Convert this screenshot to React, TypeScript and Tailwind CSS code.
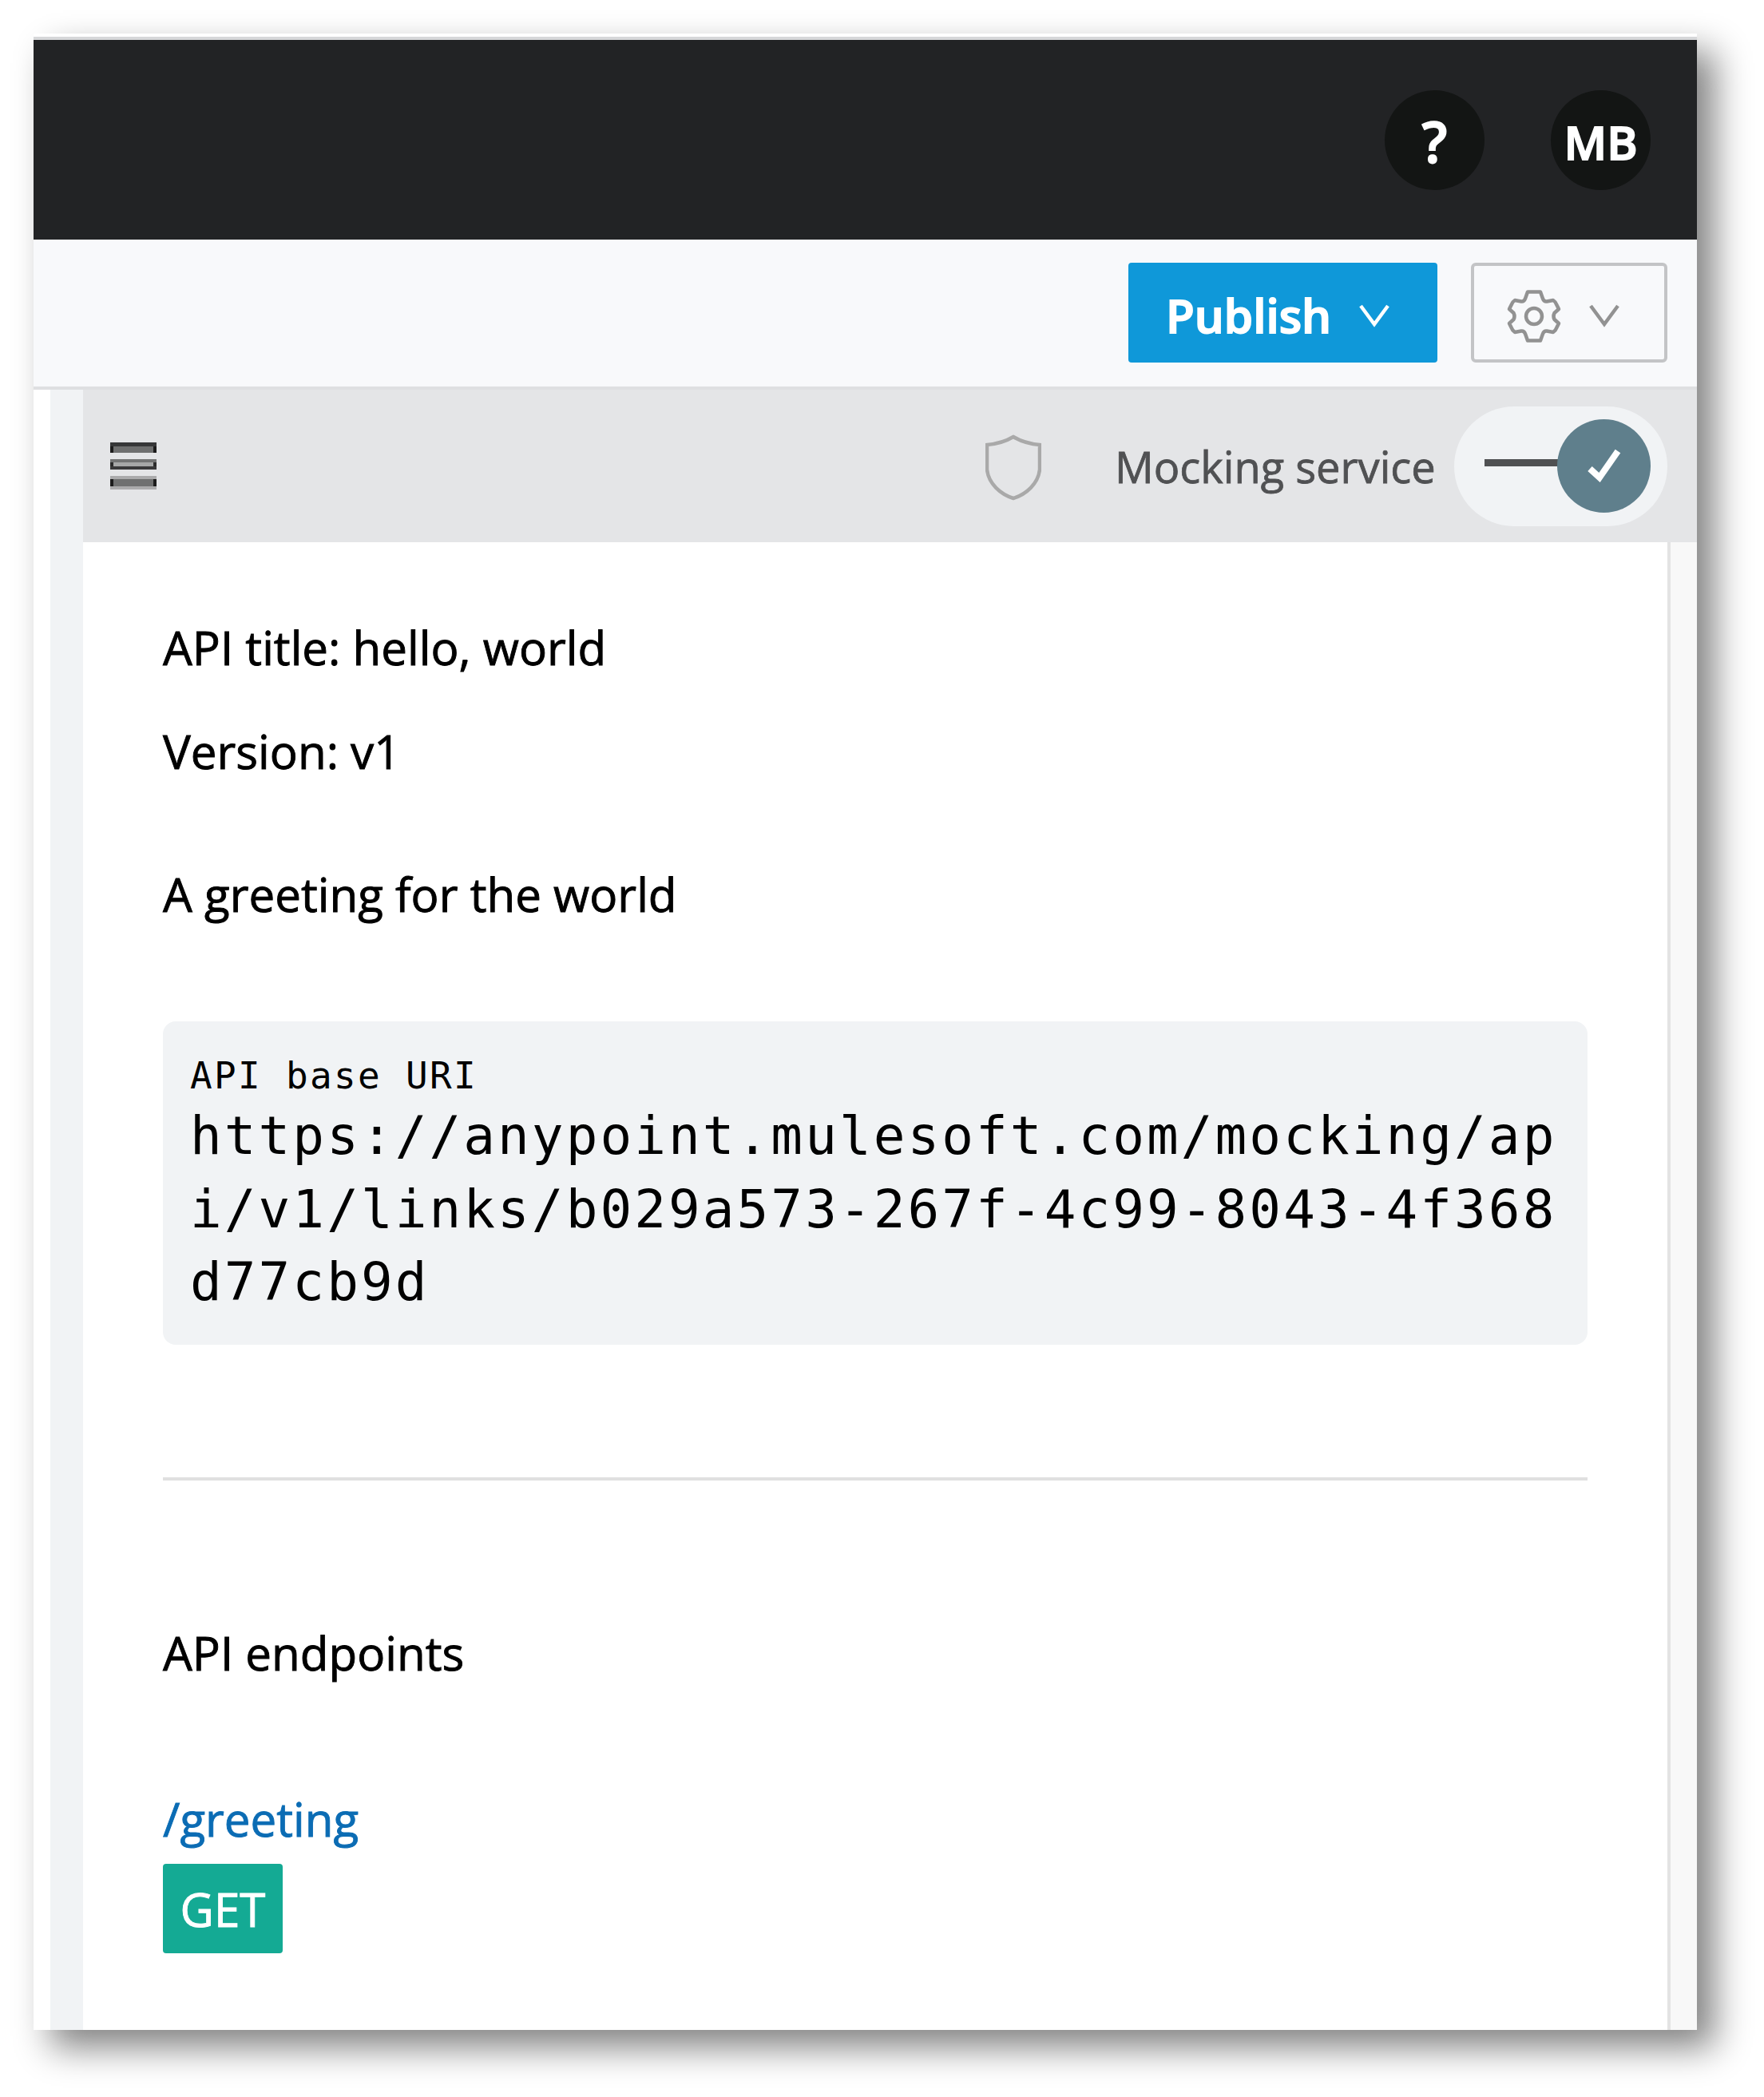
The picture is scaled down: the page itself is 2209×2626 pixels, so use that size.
import type { ReactNode } from "react";

function Chevron({ className }: { className: string }) {
  return (
    <svg width="40" height="32" viewBox="0 0 40 32" fill="none" className={className}>
      <path d="M3 3 L20 26 L37 3" stroke="currentColor" strokeWidth="4.500" />
    </svg>
  );
}

function GearIcon() {
  return (
    <svg width="70" height="70" viewBox="0 0 70 70" fill="none" stroke="#929292" strokeWidth="4.500" strokeLinejoin="round" className="mt-[9px]">
      <path d="M27 4.5H43L46 13Q47.500 17 51 16.500L59 15Q62 17 63 20L66 26L60.500 31Q58.500 35 60.500 39L66 44L63 50Q62 53 59 55L51 53.500Q47.500 53 46 57L43 65.500H27L24 57Q22.500 53 19 53.500L11 55Q8 53 7 50L4 44L9.500 39Q11.500 35 9.500 31L4 26L7 20Q8 17 11 15L19 16.500Q22.500 17 24 13Z" />
      <circle cx="35" cy="35" r="10" />
    </svg>
  );
}

function ShieldIcon() {
  return (
    <svg width="70" height="86" viewBox="0 0 70 86" fill="none" className="mt-[3px]">
      <path
        d="M35 5C25 11 14 14 2 15V46C4 64 19 77 35 82C51 77 66 64 68 46V15C56 14 45 11 35 5Z"
        stroke="#a9a9a9"
        strokeWidth="4.500"
      />
    </svg>
  );
}

function MenuIcon() {
  return (
    <div className="flex w-[58px] flex-col">
      <div className="h-[5px] bg-[#363738]" />
      <div className="h-2 border-x-4 border-[#1c1c1c] bg-[#6e6f6f]" />
      <div className="mt-2 h-1 bg-[#727373]" />
      <div className="h-[5px] border-x-4 border-[#2c2c2c] bg-[#a6a7a7]" />
      <div className="h-1 bg-[#39393a]" />
      <div className="mt-2 h-1 bg-[#ababac]" />
      <div className="h-[9px] border-x-4 border-[#1c1c1c] bg-[#6f7070]" />
      <div className="h-1 bg-[#ababac]" />
    </div>
  );
}

function HeaderCircle({ children }: { children: ReactNode }) {
  return (
    <div className="flex size-[125px] items-center justify-center rounded-full bg-[#131514] font-semibold text-white [-webkit-text-stroke:1.8px_white]">
      {children}
    </div>
  );
}

function MockingToggle() {
  return (
    <div className="relative h-[150px] w-[267px] rounded-full bg-[#f1f3f5]">
      <div className="absolute top-[66px] left-[38px] h-[9px] w-24 bg-[#4f5052]" />
      <div className="absolute top-4 left-[129px] flex size-[117px] items-center justify-center rounded-full bg-[#5f7f8c]">
        <svg width="44" height="42" viewBox="0 0 44 42" fill="none">
          <path d="M4 25L16 36L39 3" stroke="white" strokeWidth="8" />
        </svg>
      </div>
    </div>
  );
}

export default function App() {
  return (
    <div className="h-[2626px] w-[2209px] overflow-hidden bg-white pt-[42px] pl-[42px] font-['Open_Sans',sans-serif] text-[58.3px] leading-[80px] text-black">
      <div className="flex h-[2500px] w-[2083px] flex-col bg-white shadow-[22px_22px_42px_rgba(0,0,0,0.49)]">
        <div className="mt-1 h-1 bg-[#d6d7d9]" />
        <header className="flex h-[250px] items-center justify-end gap-[83px] bg-[#222325] pr-[58px]">
          <HeaderCircle>
            <span className="pt-1 text-[70px]">?</span>
          </HeaderCircle>
          <HeaderCircle>
            <span className="pt-[6px]">MB</span>
          </HeaderCircle>
        </header>

        <div className="flex h-[188px] justify-end gap-[42px] border-b-4 border-[#dedfe1] bg-[#f8f9fb] pt-[29px] pr-[37px]">
          <button className="flex h-[125px] w-[387px] items-center rounded-[4px] bg-[#0f98d9] pl-[47px] font-semibold text-white [-webkit-text-stroke:1.8px_white]">
            <span className="w-[241px] pt-[6px] text-left">Publish</span>
            <Chevron className="mt-[9px] text-white" />
          </button>
          <button className="flex h-[125px] w-[246px] items-center rounded-[6px] border-4 border-[#c3c4c6] pl-10">
            <GearIcon />
            <Chevron className="mt-[9px] ml-[33px] text-[#929292]" />
          </button>
        </div>

        <div className="flex flex-1">
          <div className="ml-[21px] w-[41px] bg-[#f1f3f5]" />
          <div className="flex flex-1 flex-col">
            <div className="flex h-[191px] items-center bg-[#e4e5e7] pl-[34px]">
              <MenuIcon />
              <div className="ml-[1038px]">
                <ShieldIcon />
              </div>
              <span className="ml-[92px] w-[425px] text-[54.2px] whitespace-nowrap text-[#505153] [-webkit-text-stroke:0.8px_#505153]">
                Mocking service
              </span>
              <MockingToggle />
            </div>

            <div className="flex flex-1">
              <main className="w-[1984px] pt-[92px] pr-[100px] pl-[100px] [-webkit-text-stroke-width:0.9px]">
                <p>API title: hello, world</p>
                <p className="mt-[50px]">Version: v1</p>
                <p className="mt-[99px]">A greeting for the world</p>

                <div className="mt-[119px] h-[405px] rounded-[16px] bg-[#f1f3f5] pt-[38px] pl-[34px] font-['DejaVu_Sans_Mono',monospace] [-webkit-text-stroke-width:0]">
                  <div className="text-[46px] leading-[60px] tracking-[2.3px]">API base URI</div>
                  <div className="w-[1718px] text-[66px] leading-[91.67px] tracking-[3.05px] break-all">
                    https://anypoint.mulesoft.com/mocking/api/v1/links/b029a573-267f-4c99-8043-4f368d77cb9d
                  </div>
                </div>

                <div className="mt-[166px] h-1 bg-[#e0e0e0]" />

                <p className="mt-[176px]">API endpoints</p>
                <p className="mt-[128px] text-[#0b6cb4]">/greeting</p>
                <div className="mt-4 flex h-28 w-[150px] items-center justify-center rounded-[4px] bg-[#14aa94] pt-[2px] text-white">
                  GET
                </div>
              </main>
              <div className="flex-1 border-l-4 border-[#e3e3e3] bg-[#f8f8f8]" />
            </div>
          </div>
        </div>
      </div>
    </div>
  );
}
